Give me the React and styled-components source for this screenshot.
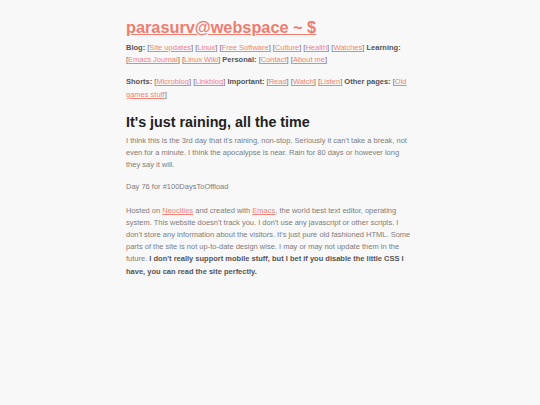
import React from "react";
import styled, { createGlobalStyle } from "styled-components";

const Global = createGlobalStyle`
  html, body { margin: 0; padding: 0; background: #f8f8f8; }
  body { font-family: "Liberation Sans", Arial, sans-serif; }
`;

const Page = styled.main`
  width: 288px;
  margin: 0 auto;
  padding-top: 17px;
  font-size: 7.5px;
  line-height: 12.2px;
  color: #7d7d7d;
`;

const Title = styled.h1`
  margin: 0 0 5px;
  font-size: 16.3px;
  line-height: 20px;
  font-weight: bold;
  a { color: #f07c70; }
`;

const Nav = styled.p`
  margin: 0 0 ${(p) => p.$gap || 0}px;
  color: #6a6a6a;
`;

const Label = styled.b`
  color: #555;
`;

const Link = styled.a`
  color: #f28378;
  text-decoration: underline;
`;

const Heading = styled.h2`
  margin: 11.7px 0 4px;
  font-size: 14.3px;
  line-height: 18px;
  color: #222;
  font-weight: bold;
`;

const Para = styled.p`
  margin: 0 0 ${(p) => p.$gap || 0}px;
`;

const Strong = styled.b`
  color: #555;
`;

const L = ({ children }) => (
  <>[<Link href="#">{children}</Link>]</>
);

export default function App() {
  return (
    <>
      <Global />
      <Page>
        <Title><a href="#">parasurv@webspace ~ $</a></Title>
        <Nav $gap={10}>
          <Label>Blog:</Label> <L>Site updates</L> <L>Linux</L> <L>Free Software</L>{" "}
          <L>Culture</L> <L>Health</L> <L>Watches</L> <Label>Learning:</Label>{" "}
          <L>Emacs Journal</L> <L>Linux Wiki</L> <Label>Personal:</Label> <L>Contact</L>{" "}
          <L>About me</L>
        </Nav>
        <Nav>
          <Label>Shorts:</Label> <L>Microblog</L> <L>Linkblog</L> <Label>Important:</Label>{" "}
          <L>Read</L> <L>Watch</L> <L>Listen</L> <Label>Other pages:</Label>{" "}
          <L>Old games stuff</L>
        </Nav>
        <Heading>It's just raining, all the time</Heading>
        <Para $gap={9.7}>
          I think this is the 3rd day that it's raining, non-stop. Seriously it can't take a
          break, not even for a minute. I think the apocalypse is near. Rain for 80 days or
          however long they say it will.
        </Para>
        <Para $gap={11.5}>Day 76 for #100DaysToOffload</Para>
        <Para>
          Hosted on <Link href="#">Neocities</Link> and created with <Link href="#">Emacs</Link>,
          the world best text editor, operating system. This website doesn't track you. I don't
          use any javascript or other scripts. I don't store any information about the visitors.
          It's just pure old fashioned HTML. Some parts of the site is not up-to-date design
          wise. I may or may not update them in the future.{" "}
          <Strong>
            I don't really support mobile stuff, but I bet if you disable the little CSS I have,
            you can read the site perfectly.
          </Strong>
        </Para>
      </Page>
    </>
  );
}
